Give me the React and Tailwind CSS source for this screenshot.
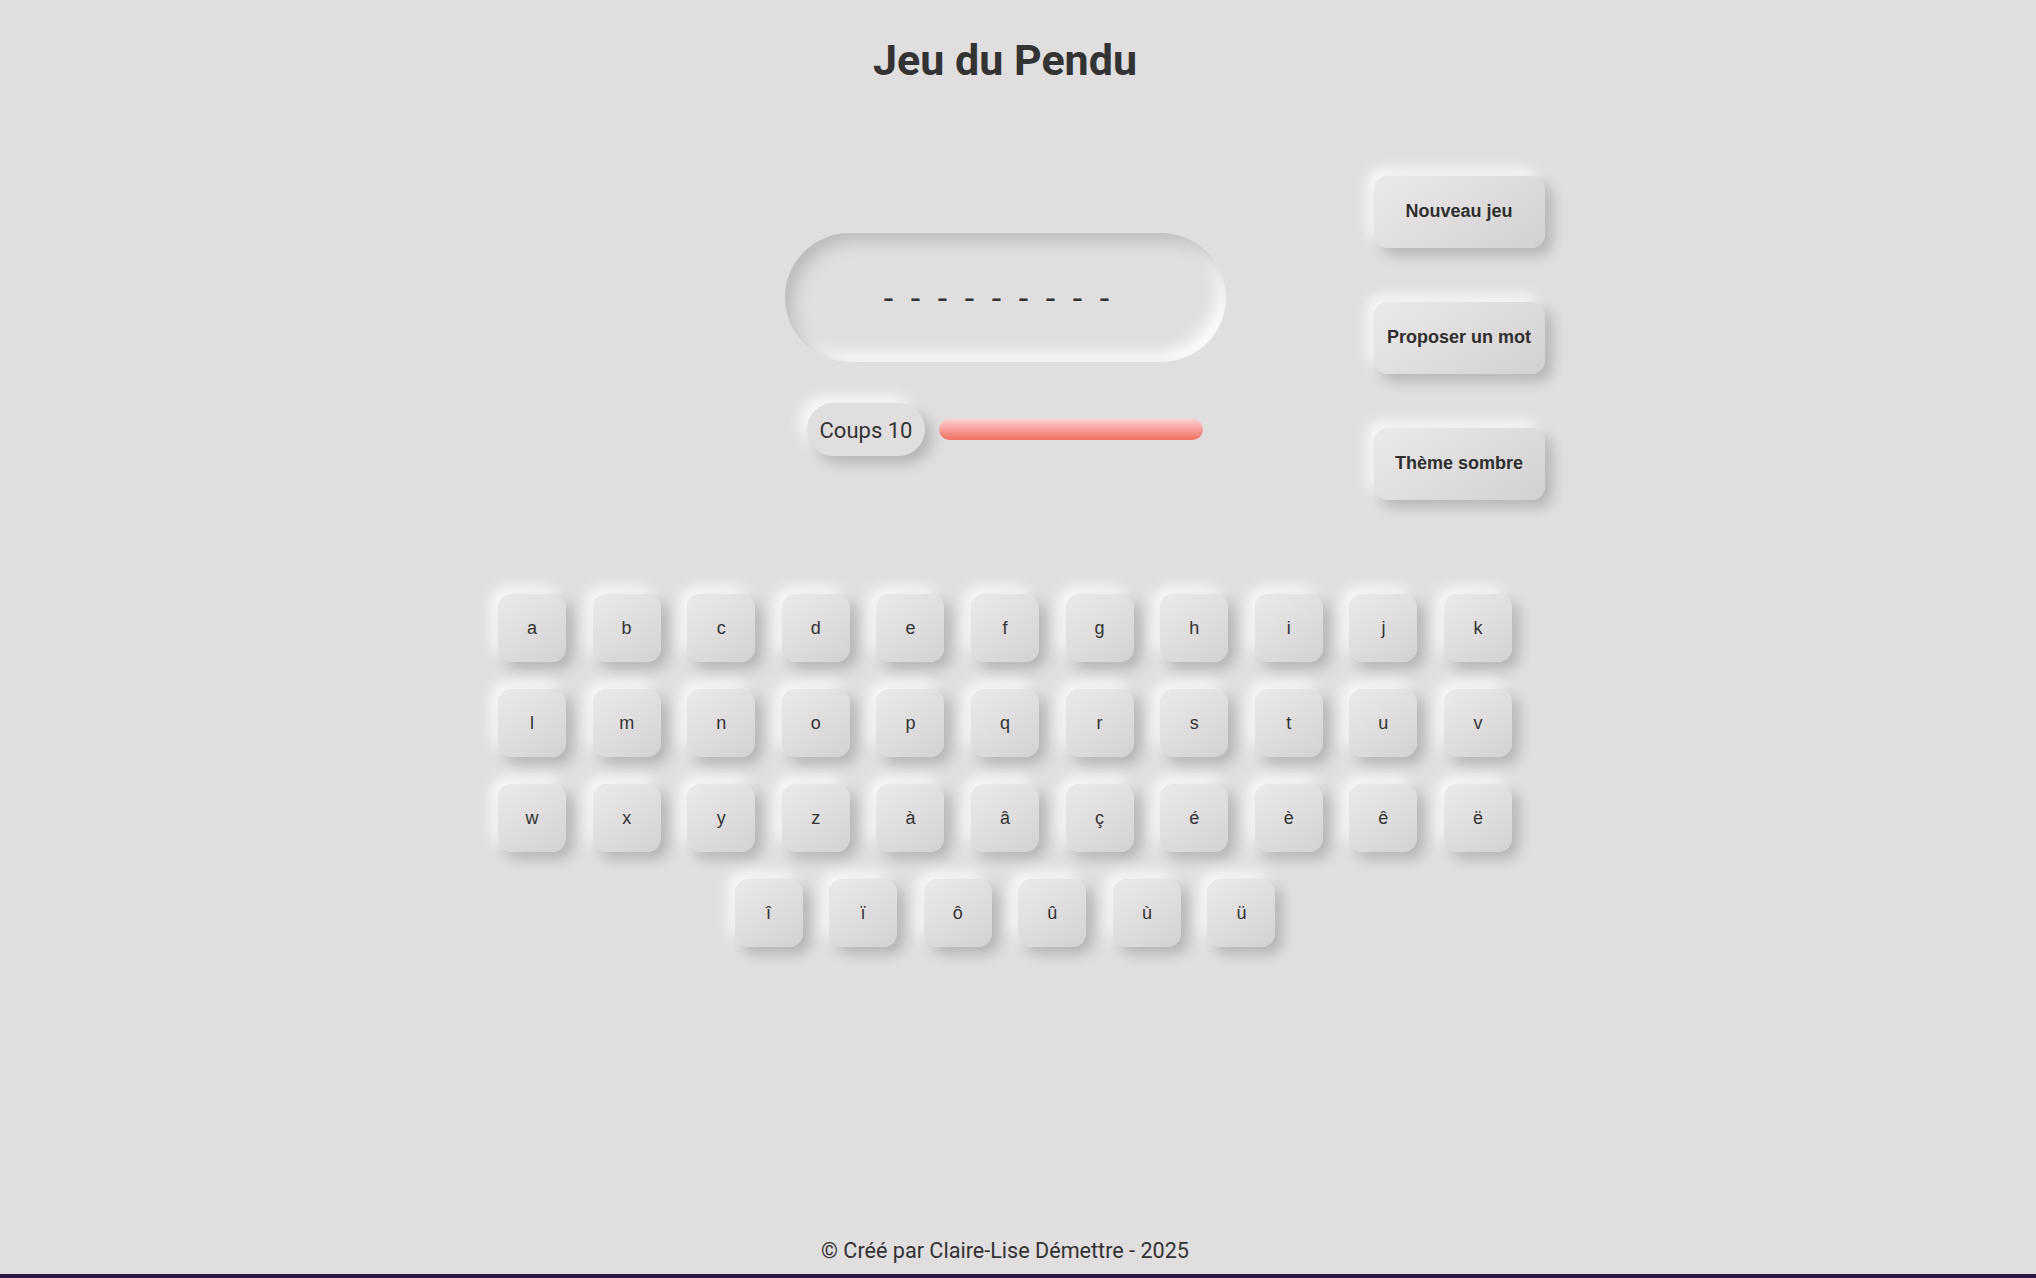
import React from 'react';

const LETTERS = [
    'a', 'b', 'c', 'd', 'e', 'f', 'g', 'h', 'i', 'j', 'k',
    'l', 'm', 'n', 'o', 'p', 'q', 'r', 's', 't', 'u', 'v',
    'w', 'x', 'y', 'z', 'à', 'â', 'ç', 'é', 'è', 'ê', 'ë',
    'î', 'ï', 'ô', 'û', 'ù', 'ü'
];

const raised = 'shadow-[7px_7px_14px_rgba(0,0,0,0.2),-7px_-7px_14px_rgba(255,255,255,0.85)]';

const SideButton = ({ children }) => (
    <button className={`w-[171px] h-[72px] pb-[2px] rounded-[14px] bg-[linear-gradient(145deg,#ebe9ea,#d2d0d1)] ${raised} text-[18px] font-bold text-[#2f2f2f] font-['Liberation_Sans',Arial,sans-serif]`}>
        {children}
    </button>
);

const Key = ({ letter }) => (
    <button className={`w-[68px] h-[68px] rounded-[14px] bg-[linear-gradient(145deg,#ebe9ea,#d3d1d2)] ${raised} flex items-center justify-center text-[18px] text-[#333] font-['Liberation_Sans',Arial,sans-serif]`}>
        {letter}
    </button>
);

export default function App() {
    const word = Array.from({ length: 9 });

    return (
        <div className="h-[1278px] flex flex-col bg-[#e0dedf] font-['Roboto',sans-serif] text-[#333]">
            <div className="flex-1 flex flex-col pr-[26px]">
                {/* Title */}
                <h1 className="pt-[39px] text-center text-[43px] leading-none font-bold text-[#333]">
                    Jeu du Pendu
                </h1>

                {/* Game area */}
                <div className="mt-[94px] grid grid-cols-[1fr_441px_1fr]">
                    <div></div>
                    <div className="pt-[57px] flex flex-col items-center">
                        <div className="w-[441px] h-[129px] rounded-full bg-[#e0dedf] shadow-[inset_8px_8px_16px_#bdbbbc,inset_-8px_-8px_16px_#ffffff] flex items-center justify-center">
                            <div className="flex pr-[17px] text-[34px] leading-none text-[#333]">
                                {word.map((_, i) => (
                                    <span key={i} className="w-[27px] text-center">-</span>
                                ))}
                            </div>
                        </div>
                        <div className="mt-[41px] flex items-center gap-[14px]">
                            <div className={`w-[118px] h-[53px] pt-[2px] rounded-full bg-[#e0dedf] ${raised} flex items-center justify-center text-[22px] text-[#333]`}>
                                Coups 10
                            </div>
                            <div className="w-[264px] h-[21px] rounded-full bg-[linear-gradient(180deg,#fdcfd3,#f1705f)]"></div>
                        </div>
                    </div>
                    <div className="pl-[148px] flex flex-col gap-[54px]">
                        <SideButton>Nouveau jeu</SideButton>
                        <SideButton>Proposer un mot</SideButton>
                        <SideButton>Thème sombre</SideButton>
                    </div>
                </div>

                {/* Keyboard */}
                <div className="mt-[94px] mx-auto w-[1016px] flex flex-wrap justify-center gap-x-[26.6px] gap-y-[27px]">
                    {LETTERS.map((l) => (
                        <Key key={l} letter={l} />
                    ))}
                </div>

                {/* Footer */}
                <footer className="mt-auto pb-[12px] text-center text-[21.6px] leading-none text-[#333]">
                    © Créé par Claire-Lise Démettre - 2025
                </footer>
            </div>
            <div className="h-[4px] bg-[#2b1742]"></div>
        </div>
    );
}
